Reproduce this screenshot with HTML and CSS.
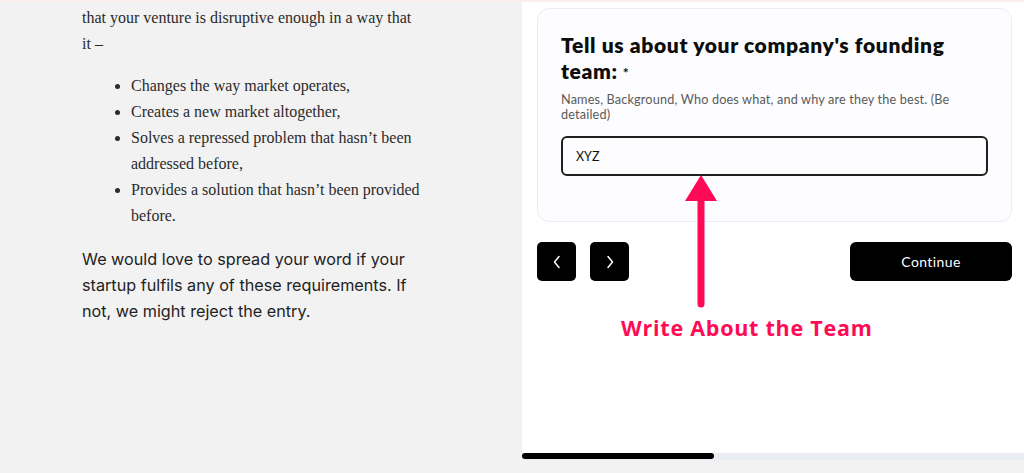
FILE: index.html
```html
<!DOCTYPE html>
<html lang="en">
<head>
<meta charset="utf-8">
<title>Founding team</title>
<link rel="stylesheet" href="styles.css">
</head>
<body>
<div class="strip"></div>
<div class="page">
  <section class="article">
    <p class="serif">that your venture is disruptive enough in a way that it –</p>
    <ul class="serif list">
      <li>Changes the way market operates,</li>
      <li>Creates a new market altogether,</li>
      <li>Solves a repressed problem that hasn’t been addressed before,</li>
      <li>Provides a solution that hasn’t been provided before.</li>
    </ul>
    <p class="sans">We would love to spread your word if your startup fulfils any of these requirements. If not, we might reject the entry.</p>
  </section>
  <section class="panel">
    <div class="panel-body">
      <div class="card">
        <h2 class="q-title">Tell us about your company's founding team:<span class="req">*</span></h2>
        <p class="q-help">Names, Background, Who does what, and why are they the best. (Be detailed)</p>
        <div class="field">XYZ</div>
      </div>
      <div class="nav">
        <div class="nav-arrows">
          <button class="icon-btn" aria-label="Previous">
            <svg width="10" height="14" viewBox="0 0 10 14"><path d="M7 1.5 L2.5 7 L7 12.5" fill="none" stroke="#fff" stroke-width="1.5" stroke-linecap="round" stroke-linejoin="round"/></svg>
          </button>
          <button class="icon-btn" aria-label="Next">
            <svg width="10" height="14" viewBox="0 0 10 14"><path d="M3 1.5 L7.5 7 L3 12.5" fill="none" stroke="#fff" stroke-width="1.5" stroke-linecap="round" stroke-linejoin="round"/></svg>
          </button>
        </div>
        <button class="continue">Continue</button>
      </div>
      <svg class="arrow" width="40" height="135" viewBox="0 0 40 135">
        <polygon points="19,0 3,26 35,26" fill="#ff0a55"/>
        <line x1="19" y1="20" x2="19" y2="129" stroke="#ff0a55" stroke-width="7" stroke-linecap="round"/>
      </svg>
      <div class="annot">Write About the Team</div>
    </div>
    <div class="scrollbar"><div class="thumb"></div></div>
  </section>
</div>
</body>
</html>
```

FILE: styles.css
```css
* { box-sizing: border-box; }
html, body { margin: 0; padding: 0; }
body {
  width: 1024px;
  height: 473px;
  overflow: hidden;
  background: #f2f2f2;
}
.strip {
  height: 2px;
  background: #fcecec;
}
.page {
  display: flex;
  height: 471px;
}
.article {
  width: 522px;
  padding: 3px 100px 0 82px;
  color: #2b2b2b;
}
.serif {
  font-family: "Liberation Serif", "Times New Roman", serif;
  font-size: 16px;
  line-height: 26px;
  margin: 0;
}
.list {
  margin: 16px 0 0;
  padding-left: 49px;
}
.sans {
  font-family: Inter, "Noto Sans", sans-serif;
  font-size: 16.2px;
  line-height: 26px;
  color: #222;
  margin: 17px 0 0;
  width: 340px;
}
.panel {
  flex: 1;
  display: flex;
  flex-direction: column;
}
.panel-body {
  position: relative;
  background: #fff;
  height: 451px;
  padding: 6px 12px 0 15px;
}
.card {
  border: 1px solid #e9edf5;
  border-radius: 12px;
  background: #fdfdff;
  padding: 23px 23px 45px;
}
.q-title {
  font-family: Lato, "Open Sans", sans-serif;
  font-weight: 800;
  font-size: 21px;
  line-height: 26px;
  color: #0d0d0d;
  margin: 0;
  width: 410px;
  letter-spacing: 0.65px;
}
.req {
  font-size: 14px;
  line-height: 1;
  font-weight: 700;
  margin-left: 5px;
  vertical-align: 1px;
}
.q-help {
  font-family: Lato, "Open Sans", sans-serif;
  font-size: 12.7px;
  line-height: 15px;
  color: #5a5a5a;
  margin: 8px 0 0;
  letter-spacing: 0.15px;
}
.field {
  margin-top: 14px;
  height: 40px;
  border: 2px solid #1f1f1f;
  border-radius: 6px;
  padding: 0 13px;
  display: flex;
  align-items: center;
  font-family: Lato, "Open Sans", sans-serif;
  font-size: 12.5px;
  color: #111;
}
.nav {
  display: flex;
  justify-content: space-between;
  align-items: center;
  margin-top: 20px;
}
.nav-arrows {
  display: flex;
  gap: 14px;
}
.icon-btn {
  width: 39px;
  height: 39px;
  border: 0;
  border-radius: 5px;
  background: #000;
  display: flex;
  align-items: center;
  justify-content: center;
  padding: 0;
}
.continue {
  width: 162px;
  height: 39px;
  border: 0;
  border-radius: 6px;
  background: #000;
  color: #fff;
  font-family: Lato, "Open Sans", sans-serif;
  font-size: 14px;
  letter-spacing: 0.4px;
}
.arrow {
  position: absolute;
  left: 160px;
  top: 173px;
}
.annot {
  position: absolute;
  left: 99px;
  top: 311px;
  font-family: "Open Sans", Lato, sans-serif;
  font-weight: 700;
  font-size: 21.5px;
  color: #ff0a55;
  letter-spacing: 0.75px;
}
.scrollbar {
  height: 7px;
  background: #e9edf1;
  display: flex;
}
.thumb {
  width: 192px;
  height: 6px;
  background: #000;
  border-radius: 3px;
}
```
